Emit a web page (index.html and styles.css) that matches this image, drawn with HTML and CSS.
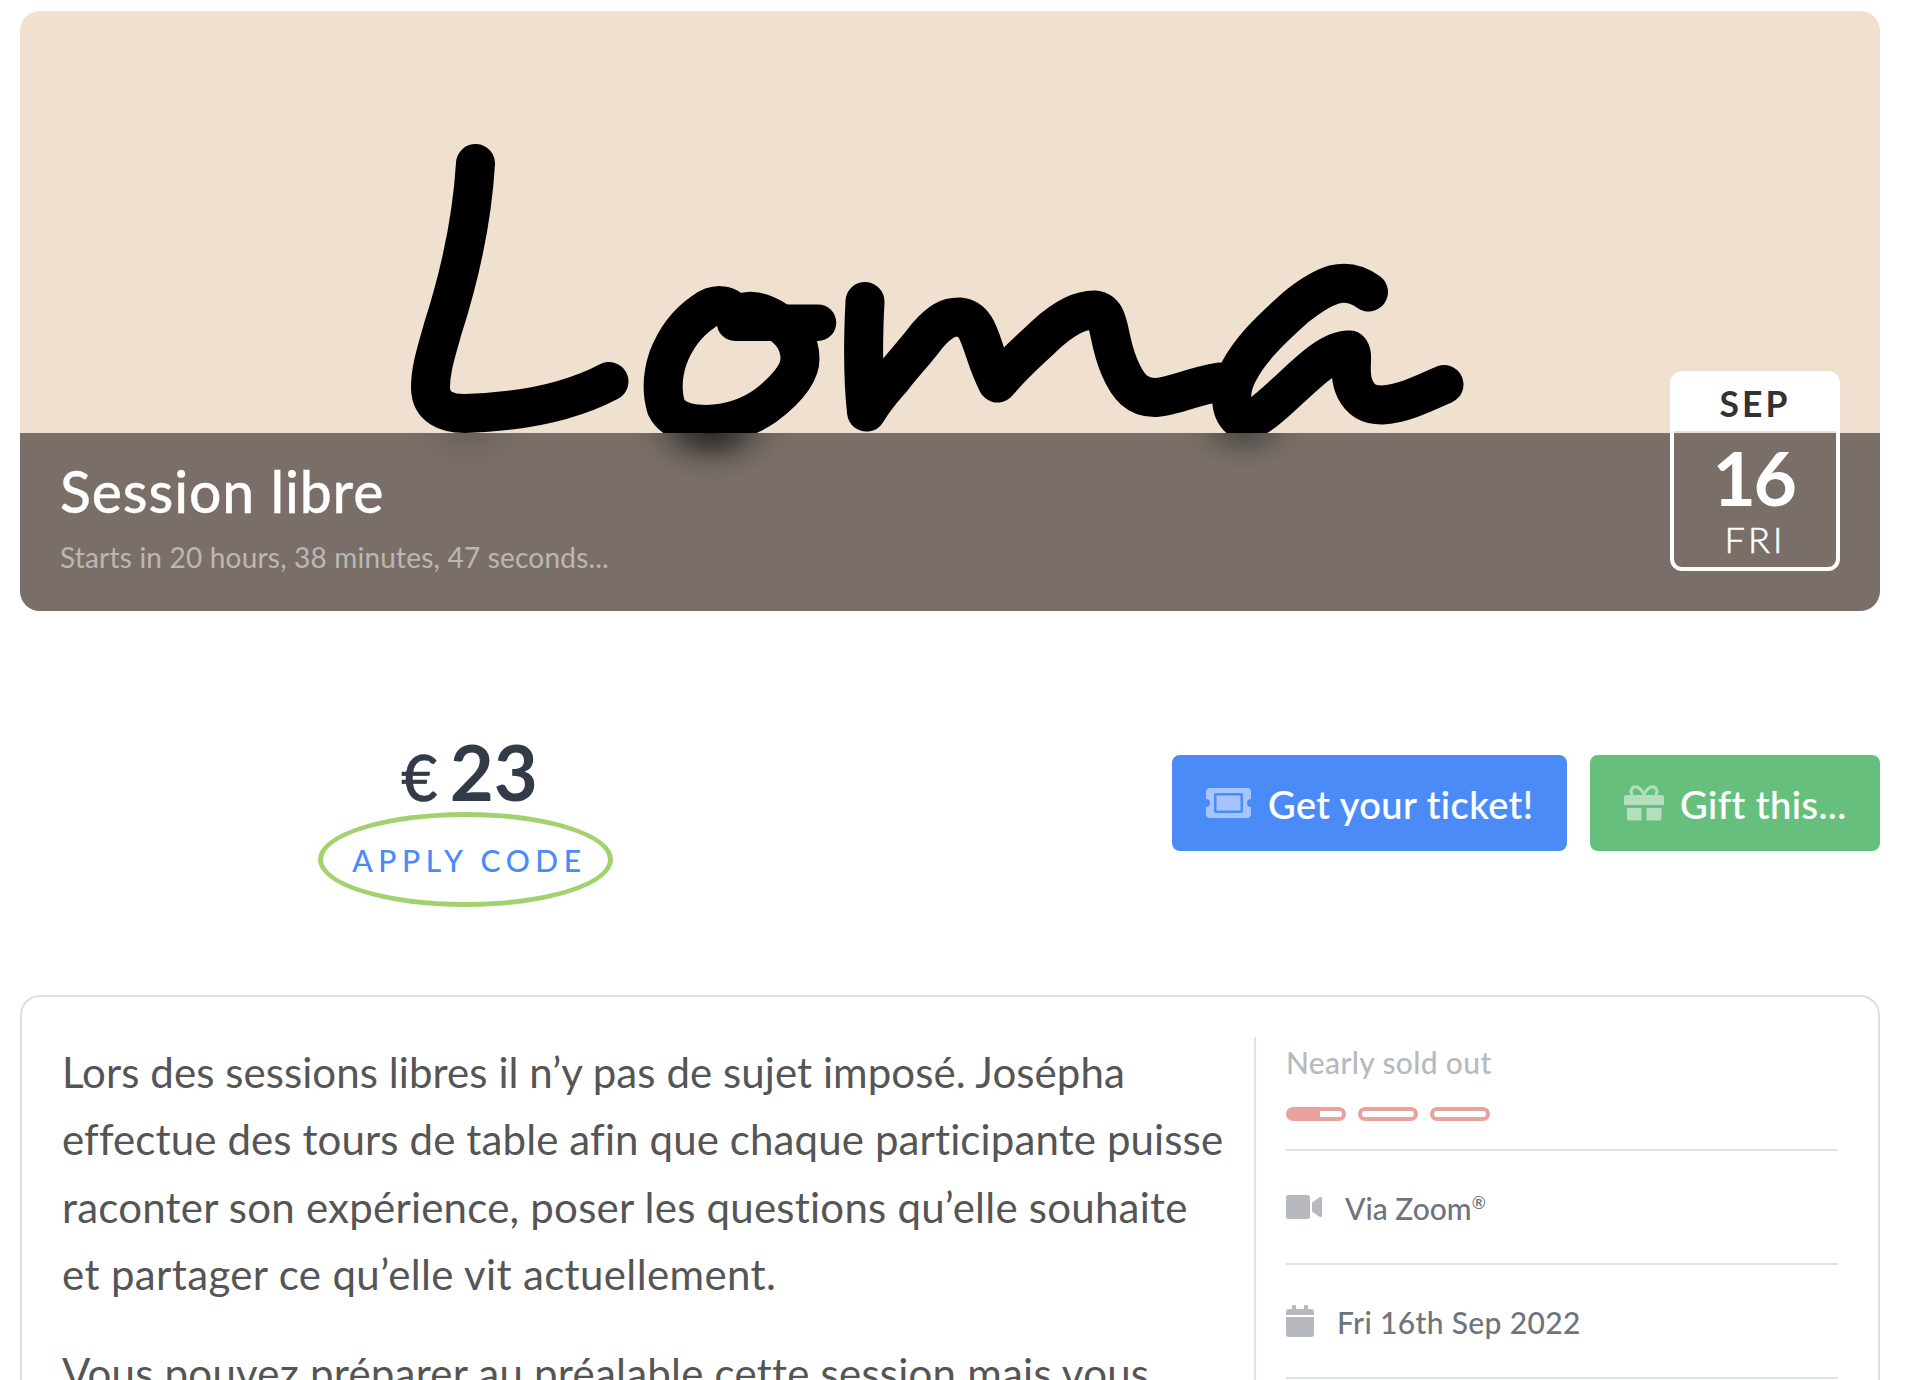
FILE: index.html
```html
<!DOCTYPE html>
<html lang="fr">
<head>
<meta charset="utf-8">
<title>Session libre</title>
<link rel="stylesheet" href="styles.css">
</head>
<body>
<main class="page">
  <header class="banner">
    <svg class="banner-logo" viewBox="0 0 1860 422" role="img" aria-label="Loma">
      <g transform="translate(-20 -11)" fill="none" stroke="#000" stroke-width="39" stroke-linecap="round" stroke-linejoin="round">
        <path d="M475.500 163.500C472 222 460 275 443 328C435 356 430.500 370 430.500 388C431 407 446 413.500 465 413.500C520 412 570 402 609 381.500"/>
        <path d="M733 312C727 304 715 303 703 312C687 323 676 337 668 358C662 376 662 393 666 407C673 421 688 424.500 707 424.500C735 423.500 752 415 765 406C785 391 800 374 800 359C800 344 793 330 772 318C758 310 745 309 738 316"/>
        <path stroke-width="36.500" d="M735 322.700H818"/>
        <path d="M865 301.500C863 340 863 380 866.500 412C876 396 884 388 892.500 378C906 361 915 352 927 336C940 321 948 317 959 317C982 319 980 350 997.500 383C1015 362 1030 350 1045.500 335C1065 317 1080 310 1094 310C1112 312 1106 335 1119 366C1128 388 1138 397.500 1154.500 397.500C1170 397.500 1190 387 1220 382"/>
        <path d="M1368.500 292C1345 275 1325 284 1296 307C1268 332 1250 350 1238.500 372C1229 390 1229 410 1240 419C1255 423 1268 409 1292 387C1310 370 1332 349 1349.500 350C1355 356 1347 372 1355 389C1361 401 1369 405 1382 405C1402 404 1423 394 1444 384.500"/>
      </g>
    </svg>
    <div class="banner-bar">
      <h1 class="banner-title">Session libre</h1>
      <p class="banner-count">Starts in 20 hours, 38 minutes, 47 seconds...</p>
    </div>
    <div class="date">
      <div class="date-month">SEP</div>
      <div class="date-day">16</div>
      <div class="date-week">FRI</div>
    </div>
  </header>

  <section class="offer">
    <div class="price">
      <div class="price-value"><span class="price-sign">€</span><span>23</span></div>
      <a class="price-code">APPLY CODE</a>
    </div>
    <div class="actions">
      <a class="btn btn-ticket">
        <svg width="45" height="30" viewBox="0 0 45 30"><path fill="currentColor" fill-rule="evenodd" d="M4 0H41A4 4 0 0 1 45 4V11A4 4 0 0 0 45 19V26A4 4 0 0 1 41 30H4A4 4 0 0 1 0 26V19A4 4 0 0 0 0 11V4A4 4 0 0 1 4 0ZM10 5A2 2 0 0 0 8 7V23A2 2 0 0 0 10 25H35A2 2 0 0 0 37 23V7A2 2 0 0 0 35 5ZM10.500 7.500H34.500V22.500H10.500Z"/></svg>
        <span>Get your ticket!</span>
      </a>
      <a class="btn btn-gift">
        <svg width="40" height="36" viewBox="0 0 40 36"><g fill="currentColor"><path d="M2.500 10H37.500A2.500 2.500 0 0 1 40 12.500V20H0V12.500A2.500 2.500 0 0 1 2.500 10Z"/><path d="M3 23H17.500V35.500H5.500A2.500 2.500 0 0 1 3 33ZM22.500 23H37.500V33A2.500 2.500 0 0 1 35 35.500H22.500Z"/></g><path fill="none" stroke="currentColor" stroke-width="3" d="M20 9.500C17 4 15 1.800 12 1.800C7 1.800 5.500 7 8.500 10M20 9.500C23 4 25 1.800 28 1.800C33 1.800 34.500 7 31.500 10"/></svg>
        <span>Gift this...</span>
      </a>
    </div>
  </section>

  <section class="card">
    <article class="about">
      <p><span class="snug">Lors des sessions libres il n’y pas de sujet imposé. Josépha</span><br>
      effectue des tours de table afin que chaque participante puisse<br>
      <span class="open">raconter son expérience, poser les questions qu’elle souhaite</span><br>
      <span class="wide">et partager ce qu’elle vit actuellement.</span></p>
      <p><span class="open">Vous pouvez préparer au préalable cette session mais vous</span></p>
    </article>
    <aside class="facts">
      <div class="fact fact-stock">
        <div class="stock-label">Nearly sold out</div>
        <div class="stock-bars"><i class="stock-bar stock-part"></i><i class="stock-bar"></i><i class="stock-bar"></i></div>
      </div>
      <div class="fact fact-place">
        <svg width="36" height="24" viewBox="0 0 36 24"><path fill="currentColor" d="M2.500 0H21.500A2.500 2.500 0 0 1 24 2.500V21.500A2.500 2.500 0 0 1 21.500 24H2.500A2.500 2.500 0 0 1 0 21.500V2.500A2.500 2.500 0 0 1 2.500 0ZM26 7.500L33.500 2.300Q36 1 36 3.500V20.500Q36 23 33.500 21.700L26 16.500Z"/></svg>
        <span>Via Zoom<sup>®</sup></span>
      </div>
      <div class="fact fact-day">
        <svg width="28" height="32" viewBox="0 0 28 32"><path fill="currentColor" d="M0 10V7A3 3 0 0 1 3 4H6V1A1 1 0 0 1 7 0H9A1 1 0 0 1 10 1V4H18V1A1 1 0 0 1 19 0H21A1 1 0 0 1 22 1V4H25A3 3 0 0 1 28 7V10ZM0 12H28V29A3 3 0 0 1 25 32H3A3 3 0 0 1 0 29Z"/></svg>
        <span>Fri 16th Sep 2022</span>
      </div>
    </aside>
  </section>
</main>
</body>
</html>
```
FILE: styles.css
```css
* { box-sizing: border-box; }

body {
  margin: 0;
  height: 1380px;
  overflow: hidden;
  background: #fff;
  font-family: Lato, "Open Sans", sans-serif;
  color: #555;
}

h1, p { margin: 0; }

.page {
  height: 1380px;
  padding: 11px 32px 0 20px;
  overflow: hidden;
}

.banner {
  position: relative;
  display: flex;
  flex-direction: column;
  justify-content: space-between;
  height: 600px;
  border-radius: 20px;
  overflow: hidden;
  background: #f0e0d0;
}

.banner-logo {
  display: block;
  width: 1860px;
  height: 422px;
}

.banner-bar {
  height: 178px;
  padding: 24px 40px 0;
  background:
    radial-gradient(80px 52px at 691px -4px, rgba(34, 32, 29, 0.92), rgba(34, 32, 29, 0.62) 30%, rgba(34, 32, 29, 0.2) 62%, rgba(34, 32, 29, 0.06) 82%, transparent),
    radial-gradient(60px 40px at 1224px -4px, rgba(50, 52, 45, 0.65), rgba(50, 52, 45, 0.38) 35%, rgba(50, 52, 45, 0.1) 72%, transparent),
    radial-gradient(60px 40px at 448px -4px, rgba(60, 54, 48, 0.28), rgba(60, 54, 48, 0.1) 50%, transparent),
    #796f68;
  color: #fff;
  white-space: nowrap;
}

.banner-title {
  font-size: 57px;
  font-weight: 500;
  line-height: 68px;
  letter-spacing: 0.9px;
  -webkit-text-stroke: 0.3px;
}

.banner-count {
  margin-top: 14px;
  font-size: 28px;
  line-height: 36px;
  letter-spacing: 0.2px;
  color: rgba(255, 255, 255, 0.5);
}

.date {
  position: absolute;
  right: 40px;
  top: 360px;
  width: 170px;
  height: 200px;
  border: 4px solid #fff;
  border-radius: 12px;
  color: #fff;
  text-align: center;
}

.date-month {
  height: 56px;
  background: #fff;
  color: #333;
  font-size: 35.5px;
  font-weight: 700;
  line-height: 57px;
  letter-spacing: 3px;
}

.date-day {
  padding-right: 3px;
  font-size: 75px;
  font-weight: 700;
  line-height: 92px;
  letter-spacing: -2.5px;
}

.date-week {
  font-size: 36px;
  font-weight: 300;
  line-height: 33px;
  letter-spacing: 3.2px;
  -webkit-text-stroke: 0.6px;
}

.offer {
  display: flex;
  justify-content: space-between;
  align-items: flex-start;
  padding-top: 121px;
}

.price {
  display: flex;
  flex-direction: column;
  align-items: center;
  width: 890px;
}

.price-value {
  display: flex;
  align-items: baseline;
  gap: 12px;
  height: 80px;
  padding-left: 9px;
  color: #333b48;
  font-size: 76px;
  font-weight: 700;
  line-height: 80px;
}

.price-sign { font-size: 63px; font-weight: 500; -webkit-text-stroke: 0.6px; }

.price-code {
  display: flex;
  align-items: center;
  justify-content: center;
  width: 295px;
  height: 95px;
  padding-left: 9px;
  border: 5px solid #a3d16c;
  border-radius: 50%;
  color: #4b8bf7;
  font-size: 30px;
  font-weight: 500;
  letter-spacing: 5.6px;
}

.actions {
  display: flex;
  gap: 23px;
  margin-top: 23px;
}

.btn {
  display: flex;
  align-items: center;
  height: 96px;
  border-radius: 8px;
  color: #fff;
  font-size: 38px;
  font-weight: 500;
  white-space: nowrap;
  letter-spacing: 0.45px;
  -webkit-text-stroke: 0.2px;
}

.btn span { padding-top: 2px; }
.btn svg { opacity: 0.5; }

.btn-ticket { width: 395px; padding-left: 34px; gap: 17px; background: #4b8bf7; }
.btn-gift { width: 290px; padding-left: 34px; gap: 16px; background: #66bf7c; }

.card {
  display: flex;
  justify-content: space-between;
  height: 480px;
  margin-top: 88px;
  padding: 40px 40px 0;
  border: 2px solid #dddfdf;
  border-radius: 20px;
}

.about {
  padding-top: 2px;
  font-size: 42px;
  line-height: 67.3px;
  letter-spacing: 0.12px;
  white-space: nowrap;
}

.about p { margin-bottom: 32px; }
.snug { letter-spacing: 0.07px; }
.open { letter-spacing: 0.23px; }
.wide { letter-spacing: 0.37px; }

.facts {
  width: 584px;
  padding-left: 30px;
  border-left: 2px solid #dfe2e8;
  color: #6c757d;
  font-size: 30px;
  font-weight: 500;
  letter-spacing: 0.35px;
}

.fact {
  display: flex;
  align-items: center;
  height: 114px;
  border-bottom: 2px solid #dee3e7;
}

.fact span { padding-top: 2px; }
.fact svg { color: #b6b9be; }

.fact-stock { flex-direction: column; align-items: flex-start; }
.stock-label { color: #b6b9be; line-height: 50px; }
.stock-bars { display: flex; gap: 12px; margin-top: 20px; }

.stock-bar {
  width: 60px;
  height: 14px;
  border: 4px solid #e8a39c;
  border-radius: 7px;
}

.stock-part { background: linear-gradient(90deg, #e8a39c 30px, #fff 30px); }

.fact-place { gap: 23px; letter-spacing: 0; }
.fact-day { gap: 23px; }
.fact sup { font-size: 17px; line-height: 0; }
```
